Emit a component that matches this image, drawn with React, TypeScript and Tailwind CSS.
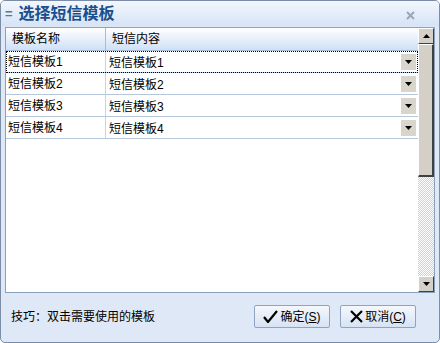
const ROWS = ["短信模板1", "短信模板2", "短信模板3", "短信模板4"];

const FONT = { fontFamily: '"Liberation Sans", "Noto Sans CJK SC", sans-serif' };

function Caret({ up = false }: { up?: boolean }) {
  return (
    <svg width="7" height="4" viewBox="0 0 7 4" className={up ? "rotate-180" : ""}>
      <path d="M0 0h7L3.5 4z" fill="#000" />
    </svg>
  );
}

export default function App() {
  return (
    <div
      className="w-[440px] h-[343px] bg-[#dfe8f6] border border-[#7a8ca6] rounded-[5px] overflow-hidden flex flex-col text-[12px] text-black"
      style={FONT}
    >
      {/* title bar */}
      <div className="h-[25px] shrink-0 flex items-center justify-between pl-[4px] pr-[24px] bg-gradient-to-b from-[#f3f7fd] to-[#d6e3f6]">
        <div className="flex items-center gap-[6px] text-[16px] font-bold text-[#1b4f8c]">
          <span className="text-[13px] font-bold text-[#5a7698]">=</span>
          <span>选择短信模板</span>
        </div>
        <svg width="9" height="9" viewBox="0 0 9 9" className="mt-[4px]">
          <path d="M1 1l7 7M8 1l-7 7" stroke="#97a6b9" strokeWidth="2" />
        </svg>
      </div>

      {/* grid */}
      <div className="mx-[4px] mt-[1px] h-[266px] shrink-0 bg-white border border-[#8aa0bc] flex">
        <div className="flex-1 flex flex-col">
          <div className="h-[23px] flex bg-gradient-to-b from-[#ffffff] to-[#cfe0f6] border-b border-[#a9bcd6]">
            <div className="w-[100px] pl-[6px] flex items-center border-r border-[#a9bcd6]">模板名称</div>
            <div className="flex-1 pl-[6px] flex items-center">短信内容</div>
          </div>
          {ROWS.map((r, i) => (
            <div
              key={r}
              className={`h-[22px] flex border-b border-[#b7c7db] ${i === 0 ? "outline outline-1 outline-dotted outline-black -outline-offset-1" : ""}`}
            >
              <div className="w-[100px] pl-[2px] pt-[2px] border-r border-[#c8d4e3]">{r}</div>
              <div className="flex-1 flex items-center justify-between pl-[3px] pr-[2px]">
                <span className="pt-[3px]">{r}</span>
                <div className="w-[15px] h-[16px] bg-[#d8d5cd] flex items-center justify-center">
                  <Caret />
                </div>
              </div>
            </div>
          ))}
        </div>
        {/* scrollbar */}
        <div className="w-[16px] flex flex-col bg-[repeating-conic-gradient(#d4d0c8_0_25%,#ffffff_0_50%)] bg-[length:2px_2px]">
          <div className="h-[16px] bg-[#d4d0c8] border-r border-b border-[#404040] border-l border-t border-l-white border-t-white flex items-center justify-center">
            <Caret up />
          </div>
          <div className="h-[133px] bg-[#d4d0c8] border-r-2 border-b-2 border-[#404040] border-l border-t border-l-white border-t-white" />
          <div className="flex-1" />
          <div className="h-[16px] bg-[#d4d0c8] border-r border-b border-[#404040] border-l border-t border-l-white border-t-white flex items-center justify-center">
            <Caret />
          </div>
        </div>
      </div>

      {/* footer */}
      <div className="flex-1 flex items-center justify-between pl-[10px] pr-[23px] pb-[2px]">
        <span>技巧：双击需要使用的模板</span>
        <div className="flex gap-[10px]">
          <button className="w-[76px] h-[23px] rounded-[2px] border border-[#8ea4c1] bg-gradient-to-b from-[#f4f8fd] to-[#d7e3f3] flex items-center justify-center gap-[2px]">
            <svg width="15" height="13" viewBox="0 0 15 13">
              <path d="M1 7l4 5L14 1" stroke="#000" strokeWidth="2.2" fill="none" />
            </svg>
            <span>确定(<span className="underline">S</span>)</span>
          </button>
          <button className="w-[76px] h-[23px] rounded-[2px] border border-[#8ea4c1] bg-gradient-to-b from-[#f4f8fd] to-[#d7e3f3] flex items-center justify-center gap-[2px]">
            <svg width="13" height="13" viewBox="0 0 13 13">
              <path d="M1 1l11 11M12 1L1 12" stroke="#000" strokeWidth="2.2" />
            </svg>
            <span>取消(<span className="underline">C</span>)</span>
          </button>
        </div>
      </div>
    </div>
  );
}
